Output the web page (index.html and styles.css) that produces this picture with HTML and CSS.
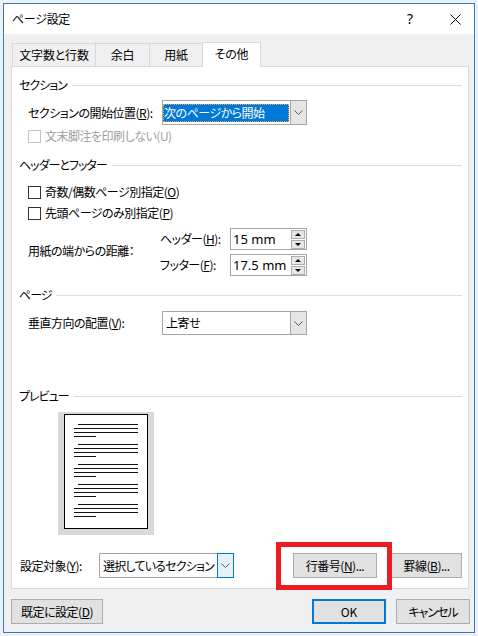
FILE: index.html
```html
<!DOCTYPE html>
<html lang="ja">
<head>
<meta charset="utf-8">
<title>ページ設定</title>
<link rel="stylesheet" href="styles.css">
</head>
<body>
<div class="window">
  <div class="titlebar">
    <span class="title">ページ設定</span>
    <div class="title-controls">
      <span class="help">?</span>
      <svg class="close" width="11" height="11" viewBox="0 0 11 11"><path d="M0.5 0.5L10.5 10.5M10.5 0.5L0.5 10.5" stroke="#000" stroke-width="1" fill="none"/></svg>
    </div>
  </div>

  <div class="tabs">
    <div class="tab tab-1">文字数と行数</div>
    <div class="tab tab-2">余白</div>
    <div class="tab tab-3">用紙</div>
    <div class="tab tab-active">その他</div>
  </div>

  <div class="panel">
    <div class="group-head m-h1"><span class="kana">セクション</span><i class="rule"></i></div>

    <div class="row m-r2">
      <span class="label w-start">セクションの開始位置(<u>R</u>):</span>
      <div class="select sel-main">
        <span class="sel-text"><span class="hl">次のページから開始</span></span>
        <span class="sel-btn"><svg width="9" height="5" viewBox="0 0 9 5"><path d="M0.5 0.5L4.5 4.5L8.5 0.5" stroke="#5a5a5a" fill="none"/></svg></span>
      </div>
    </div>

    <div class="row check-row disabled m-r3">
      <span class="cb"></span><span>文末脚注を印刷しない(U)</span>
    </div>

    <div class="group-head m-h2"><span class="kana">ヘッダーとフッター</span><i class="rule"></i></div>

    <div class="row check-row m-c1">
      <span class="cb"></span><span>奇数/偶数ページ別指定(<u>O</u>)</span>
    </div>
    <div class="row check-row m-c2">
      <span class="cb"></span><span>先頭ページのみ別指定(<u>P</u>)</span>
    </div>

    <div class="row dist m-dist">
      <span class="label w-dist">用紙の端からの距離：</span>
      <div class="spin-rows">
        <div class="spin-row">
          <span class="sub-label">ヘッダー(<u>H</u>):</span>
          <div class="spin">
            <span class="spin-val">15 mm</span>
            <span class="spin-btns"><span class="sb"><i class="up"></i></span><span class="sb"><i class="down"></i></span></span>
          </div>
        </div>
        <div class="spin-row">
          <span class="sub-label">フッター(<u>F</u>):</span>
          <div class="spin">
            <span class="spin-val">17.5 mm</span>
            <span class="spin-btns"><span class="sb"><i class="up"></i></span><span class="sb"><i class="down"></i></span></span>
          </div>
        </div>
      </div>
    </div>

    <div class="group-head m-h3"><span class="kana">ページ</span><i class="rule r-page"></i></div>

    <div class="row m-r4">
      <span class="label w-start">垂直方向の配置(<u>V</u>):</span>
      <div class="select sel-main sel-short">
        <span class="sel-text plain">上寄せ</span>
        <span class="sel-btn"><svg width="9" height="5" viewBox="0 0 9 5"><path d="M0.5 0.5L4.5 4.5L8.5 0.5" stroke="#5a5a5a" fill="none"/></svg></span>
      </div>
    </div>

    <div class="group-head m-h4"><span class="kana">プレビュー</span><i class="rule"></i></div>

    <div class="preview-wrap m-prev">
      <div class="preview-shadow">
        <div class="page">
          <div class="grp"><i class="ln ind"></i><i class="ln"></i><i class="ln"></i><i class="ln short"></i></div>
          <div class="grp"><i class="ln ind"></i><i class="ln"></i><i class="ln"></i><i class="ln short"></i></div>
          <div class="grp"><i class="ln ind"></i><i class="ln"></i><i class="ln"></i><i class="ln short"></i></div>
          <div class="grp"><i class="ln ind"></i><i class="ln"></i><i class="ln"></i><i class="ln short"></i></div>
          <div class="grp"><i class="ln ind"></i><i class="ln"></i><i class="ln"></i><i class="ln short"></i></div>
        </div>
      </div>
    </div>

    <div class="row-bottom m-bot">
      <span class="label w-target">設定対象(<u>Y</u>):</span>
      <div class="select sel-target">
        <span class="sel-text plain tight">選択しているセクション</span>
        <span class="sel-btn focus"><svg width="9" height="5" viewBox="0 0 9 5"><path d="M0.5 0.5L4.5 4.5L8.5 0.5" stroke="#5a5a5a" fill="none"/></svg></span>
      </div>
      <div class="btn btn-line">行番号(<u>N</u>)...</div>
      <div class="btn btn-border">罫線(<u>B</u>)...</div>
    </div>
  </div>

  <div class="footer">
    <div class="btn btn-default">既定に設定(<u>D</u>)</div>
    <div class="btn btn-ok">OK</div>
    <div class="btn btn-cancel kana">キャンセル</div>
  </div>

  <div class="annot"></div>
</div>
</body>
</html>
```

FILE: styles.css
```css
* { box-sizing: border-box; }
html, body { margin: 0; padding: 0; }
body {
  background: #f0f0f0;
  width: 478px;
  height: 636px;
  overflow: hidden;
  font-family: "Noto Sans CJK JP", "Noto Sans", sans-serif;
  font-size: 12px;
  line-height: 16px;
  color: #000;
  font-feature-settings: "palt" 1;
  letter-spacing: -0.5px;
}
u { text-decoration: underline; text-underline-offset: 1px; text-decoration-thickness: 1px; }
i { display: block; }
.kana { letter-spacing: -1px; }

.window {
  position: relative;
  margin: 3px 0 0 3px;
  width: 472px;
  height: 630px;
  border: 1px solid #2b79d0;
  background: #f0f0f0;
  display: flex;
  flex-direction: column;
}

/* title bar */
.titlebar {
  height: 30px;
  flex: none;
  background: #fff;
  display: flex;
  align-items: center;
  padding-left: 8px;
}
.title { font-size: 12px; letter-spacing: -0.3px; }
.title-controls {
  margin-left: auto;
  margin-right: 13px;
  display: flex;
  align-items: center;
  gap: 37px;
}
.help { font-family: "Noto Sans", sans-serif; font-size: 14px; font-feature-settings: normal; letter-spacing: 0; }
.close { display: block; }

/* tabs */
.tabs {
  margin-top: 8px;
  height: 24px;
  flex: none;
  display: flex;
  align-items: flex-end;
  padding-left: 8px;
}
.tab {
  height: 23px;
  border-top: 1px solid #d9d9d9;
  border-left: 1px solid #d9d9d9;
  background: #f0f0f0;
  display: flex;
  align-items: center;
  justify-content: center;
  padding-bottom: 1px;
  letter-spacing: -0.2px;
}
.tab-1 { width: 83px; }
.tab-2 { width: 54px; }
.tab-3 { width: 53px; }
.tab-active {
  width: 59px;
  height: 25px;
  margin-bottom: -1px;
  background: #fff;
  border-right: 1px solid #d9d9d9;
  position: relative;
  z-index: 1;
  padding-bottom: 2px;
}

/* panel */
.panel {
  margin-left: 7px;
  width: 458px;
  height: 523px;
  flex: none;
  border: 1px solid #d9d9d9;
  background: #fff;
  display: flex;
  flex-direction: column;
  padding-top: 10px;
}
.group-head {
  height: 16px;
  display: flex;
  align-items: center;
  padding-left: 7px;
  padding-right: 6px;
}
.rule { flex: 1; height: 1px; background: #dcdcdc; margin-left: 5px; }
.r-page { margin-left: 4px; }

.row {
  display: flex;
  align-items: center;
  padding-left: 16px;
}
.m-r2 { margin-top: 7px; height: 25px; }
.m-r3 { margin-top: 3px; height: 16px; }
.m-h2 { margin-top: 13px; }
.m-c1 { margin-top: 11px; height: 16px; }
.m-c2 { margin-top: 5px; height: 16px; }
.m-dist { margin-top: 7px; height: 48px; }
.m-h3 { margin-top: 11px; }
.m-r4 { margin-top: 8px; height: 24px; }
.m-h4 { margin-top: 53px; }
.m-prev { margin-top: 8px; }
.m-bot { margin-top: 18px; }

.label { flex: none; white-space: nowrap; }
.w-start { width: 134px; }
.w-dist { width: 132px; margin-top: -3px; }
.w-target { width: 79px; }

/* select */
.select {
  display: flex;
  align-items: stretch;
  border: 1px solid #a6a6a6;
  background: #fff;
  flex: none;
}
.sel-main { width: 145px; height: 25px; }
.sel-short { height: 24px; }
.sel-text {
  flex: 1;
  display: flex;
  align-items: center;
  white-space: nowrap;
  overflow: hidden;
}
.sel-text.plain { padding-left: 3px; }
.sel-text.tight { letter-spacing: -0.8px; }
.hl {
  display: flex;
  align-items: center;
  width: 100%;
  height: 18px;
  margin-top: 1px;
  padding-left: 1px;
  background: #0078d7;
  color: #fff;
  outline: 1px dotted #f3a640;
  outline-offset: -1px;
}
.sel-btn {
  width: 17px;
  flex: none;
  display: flex;
  align-items: center;
  justify-content: center;
  background: #e5e5e5;
  border: 1px solid #a6a6a6;
  margin: -1px -1px -1px 1px;
}
.sel-btn svg { display: block; }
.sel-target { width: 135px; height: 25px; }
.sel-btn.focus {
  width: 17px;
  background: #e5f1fb;
  border: 1px solid #0078d7;
  margin: -1px -1px -1px 1px;
}

/* checkbox */
.check-row { gap: 4px; }
.cb {
  width: 13px;
  height: 13px;
  flex: none;
  border: 1px solid #333;
  background: #fff;
}
.disabled { color: #a0a0a0; }
.disabled .cb { border-color: #c3c3c3; }

/* spinners */
.dist { align-items: center; }
.spin-rows { display: flex; flex-direction: column; gap: 4px; }
.spin-row { display: flex; align-items: center; height: 22px; }
.sub-label { width: 70px; white-space: nowrap; }
.spin {
  width: 77px;
  height: 22px;
  border: 1px solid #a6a6a6;
  display: flex;
  align-items: stretch;
}
.spin-val {
  flex: 1;
  display: flex;
  align-items: center;
  padding-left: 2px;
  font-size: 13px;
  letter-spacing: 0;
  font-family: "Noto Sans", "Noto Sans CJK JP", sans-serif;
}
.spin-btns {
  display: flex;
  flex-direction: column;
  justify-content: center;
  gap: 1px;
  padding: 0 1px 0 0;
}
.sb {
  width: 14px;
  height: 9px;
  background: #e6e6e6;
  border: 1px solid #adadad;
  display: flex;
  align-items: center;
  justify-content: center;
}
.up {
  width: 0; height: 0;
  border-left: 3px solid transparent;
  border-right: 3px solid transparent;
  border-bottom: 3px solid #000;
}
.down {
  width: 0; height: 0;
  border-left: 3px solid transparent;
  border-right: 3px solid transparent;
  border-top: 3px solid #000;
}

/* preview */
.preview-wrap { padding-left: 46px; }
.preview-shadow {
  width: 96px;
  height: 123px;
  background: #d9d9d9;
  padding: 2px 6px 6px 6px;
}
.page {
  width: 84px;
  height: 115px;
  border: 1px solid #000;
  background: #fff;
  padding: 9px 9px 0 9px;
}
.grp { display: flex; flex-direction: column; gap: 3px; margin-bottom: 7px; }
.ln { height: 1px; background: #111; }
.ln.ind { margin-left: 4px; }
.ln.short { width: 22px; }

/* bottom row */
.row-bottom {
  display: flex;
  align-items: center;
  padding-left: 8px;
  height: 25px;
}
.btn {
  height: 25px;
  border: 1px solid #adadad;
  background: #e1e1e1;
  display: flex;
  align-items: center;
  justify-content: center;
  white-space: nowrap;
  flex: none;
}
.btn-line { margin-left: 59px; width: 84px; }
.btn-border { margin-left: 14px; width: 71px; }

/* footer */
.footer {
  margin-top: 10px;
  height: 25px;
  flex: none;
  display: flex;
  padding-left: 7px;
  padding-right: 4px;
}
.btn-default { width: 92px; }
.btn-ok { margin-left: auto; width: 74px; border: 2px solid #0078d7; letter-spacing: 0; }
.btn-cancel { margin-left: 10px; width: 74px; }

/* red annotation box */
.annot {
  position: absolute;
  left: 272px;
  top: 538px;
  width: 116px;
  height: 48px;
  border: 5px solid #ec1c24;
  pointer-events: none;
}
```
